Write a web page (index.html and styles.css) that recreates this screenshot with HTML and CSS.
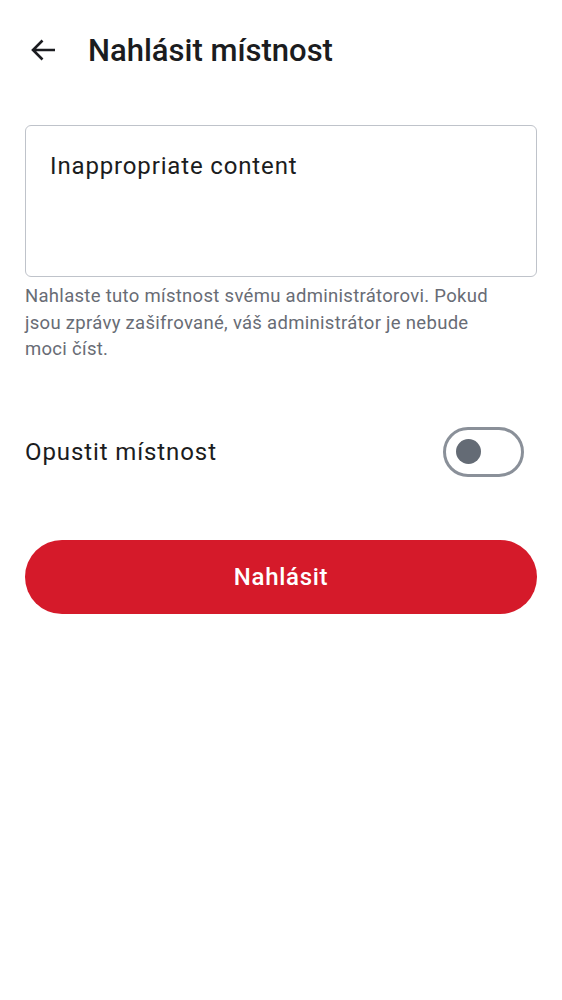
FILE: index.html
```html
<!DOCTYPE html>
<html lang="cs">
<head>
<meta charset="utf-8">
<title>Nahlásit místnost</title>
<link rel="stylesheet" href="styles.css">
</head>
<body>
<div class="screen">
  <header class="topbar">
    <button class="back" aria-label="Zpět">
      <svg width="24" height="22" viewBox="0 0 24 22"><path d="M24 11H2.5M11.5 1.5L2 11l9.5 9.5" fill="none" stroke="#1b1c20" stroke-width="2.6" stroke-linecap="butt" stroke-linejoin="miter"/></svg>
    </button>
    <h1 class="title">Nahlásit místnost</h1>
  </header>
  <main class="content">
    <div class="field">
      <div class="input">Inappropriate content</div>
      <p class="helper">Nahlaste tuto místnost svému administrátorovi. Pokud jsou zprávy zašifrované, váš administrátor je nebude moci číst.</p>
    </div>
    <div class="row">
      <span class="row-label">Opustit místnost</span>
      <span class="switch"><span class="thumb"></span></span>
    </div>
    <button class="submit">Nahlásit</button>
  </main>
</div>
</body>
</html>
```

FILE: styles.css
```css
* { box-sizing: border-box; }
html, body { margin: 0; padding: 0; background: #ffffff; }
body { font-family: Roboto, "Noto Sans", sans-serif; color: #1b1c20; }
.screen { width: 562px; }
.topbar {
  display: flex;
  align-items: center;
  height: 100px;
  padding-left: 31px;
  gap: 33px;
}
.back {
  border: 0; background: none; padding: 0; margin: 0;
  width: 24px; height: 22px; display: flex;
}
.title {
  margin: 0;
  font-size: 31px;
  font-weight: 500;
  color: #1b1c20;
  line-height: 1;
}
.content { padding: 25px 25px 0 25px; }
.input {
  height: 152px;
  border: 1.5px solid #bfc3ca;
  border-radius: 6px;
  padding: 25px 24px;
  font-size: 24px;
  letter-spacing: 0.85px;
  line-height: 30px;
  color: #1b1c20;
}
.helper {
  margin: 6px 0 0 0;
  max-width: 472px;
  font-size: 18.5px;
  line-height: 26.5px;
  letter-spacing: 0.3px;
  color: #686c75;
}
.row {
  display: flex;
  align-items: center;
  justify-content: space-between;
  margin-top: 64px;
  height: 50px;
  padding-right: 13px;
}
.row-label { font-size: 24px; color: #1b1c20; letter-spacing: 0.9px; }
.switch {
  width: 81px; height: 50px;
  border: 3px solid #8a9099;
  border-radius: 25px;
  display: flex; align-items: center;
  padding-left: 10px;
}
.thumb { width: 25px; height: 25px; border-radius: 50%; background: #646b75; }
.submit {
  display: block;
  width: 100%;
  height: 74px;
  margin-top: 63px;
  border: 0;
  border-radius: 37px;
  background: #d51a2a;
  color: #ffffff;
  font-family: Roboto, "Noto Sans", sans-serif;
  font-size: 24px;
  font-weight: 500;
  letter-spacing: 0.7px;
}
```
